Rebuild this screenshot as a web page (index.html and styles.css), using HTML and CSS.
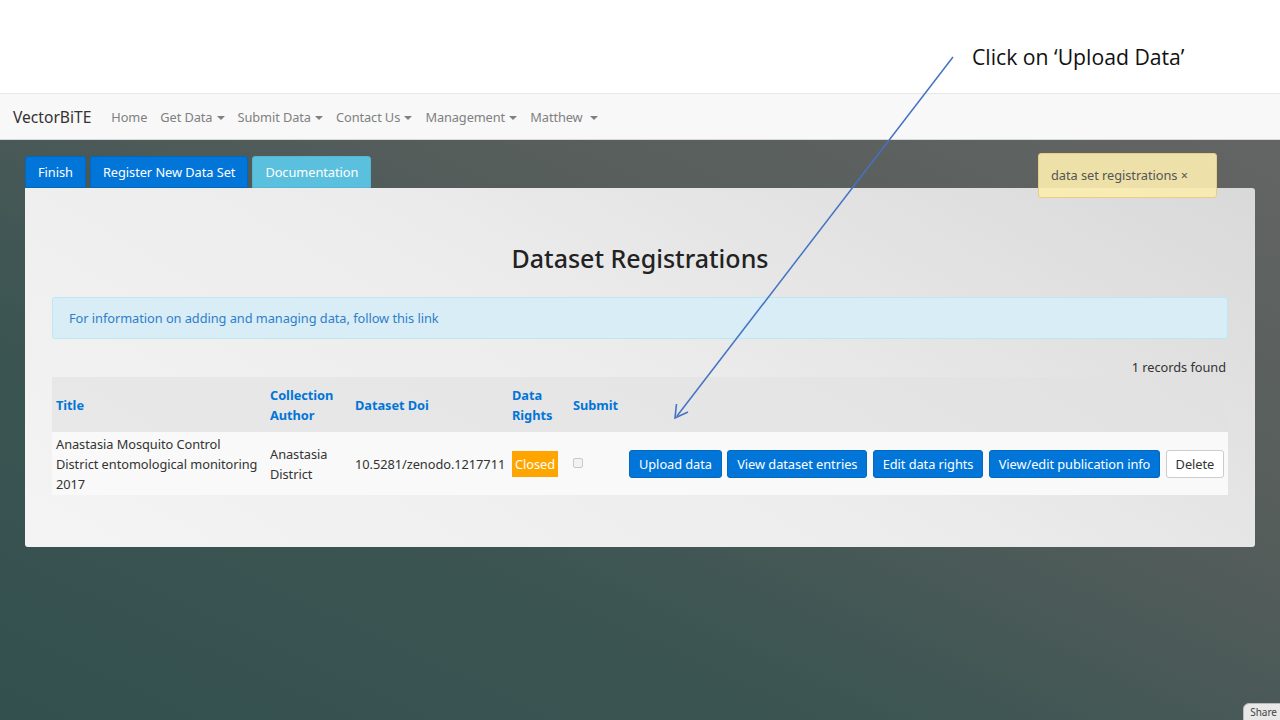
FILE: index.html
```html
<!DOCTYPE html>
<html>
<head>
<meta charset="utf-8">
<link rel="stylesheet" href="styles.css">
</head>
<body>
<div class="slide-top">
  <div class="caption">Click on ‘Upload Data’</div>
</div>
<nav class="navbar">
  <span class="brand">VectorBiTE</span>
  <ul class="nav">
    <li>Home</li>
    <li>Get Data <span class="caret"></span></li>
    <li>Submit Data <span class="caret"></span></li>
    <li>Contact Us <span class="caret"></span></li>
    <li>Management <span class="caret"></span></li>
    <li>Matthew &nbsp;<span class="caret"></span></li>
  </ul>
</nav>
<main class="stage">
  <div class="tabs">
    <button class="btn btn-primary tab">Finish</button>
    <button class="btn btn-primary tab">Register New Data Set</button>
    <button class="btn btn-info tab">Documentation</button>
  </div>
  <section class="panel">
    <h1 class="title">Dataset Registrations</h1>
    <div class="alert">For information on adding and managing data, follow this link</div>
    <div class="records">1 records found</div>
    <table class="grid">
      <colgroup>
        <col class="c1"><col class="c2"><col class="c3"><col class="c4"><col class="c5"><col>
      </colgroup>
      <thead>
        <tr>
          <th>Title</th>
          <th>Collection<br>Author</th>
          <th>Dataset Doi</th>
          <th>Data<br>Rights</th>
          <th>Submit</th>
          <th></th>
        </tr>
      </thead>
      <tbody>
        <tr>
          <td>Anastasia Mosquito Control District entomological monitoring 2017</td>
          <td>Anastasia District</td>
          <td>10.5281/zenodo.1217711</td>
          <td><span class="badge">Closed</span></td>
          <td><span class="check"></span></td>
          <td class="actions">
            <button class="btn btn-primary">Upload data</button>
            <button class="btn btn-primary">View dataset entries</button>
            <button class="btn btn-primary">Edit data rights</button>
            <button class="btn btn-primary">View/edit publication info</button>
            <button class="btn btn-default">Delete</button>
          </td>
        </tr>
      </tbody>
    </table>
  </section>
  <div class="notice">data set registrations <span class="x">×</span></div>
  <div class="share">Share</div>
</main>
<svg class="arrow" width="1280" height="720" viewBox="0 0 1280 720">
  <line x1="953" y1="57" x2="677" y2="416" stroke="#4472c4" stroke-width="1.5"/>
  <polyline points="676.5,404 675,418 688,412" fill="none" stroke="#4472c4" stroke-width="1.6"/>
</svg>
</body>
</html>
```
FILE: styles.css
```css
html, body {
  margin: 0;
  padding: 0;
  width: 1280px;
  height: 720px;
  overflow: hidden;
  font-family: "Noto Sans", "Open Sans", sans-serif;
}
body { position: relative; }

.slide-top {
  height: 93px;
  background: #ffffff;
  position: relative;
}
.caption {
  position: absolute;
  left: 972px;
  top: 42px;
  font-family: "Open Sans", sans-serif;
  font-size: 21.2px;
  color: #111;
}

.navbar {
  background: #f8f8f8;
  border-top: 1px solid #e7e7e7;
  border-bottom: 1px solid #d8d8d8;
  box-sizing: border-box;
  height: 47px;
  display: flex;
  align-items: center;
  padding-left: 13px;
}
.brand {
  font-size: 15.6px;
  color: #333;
  margin-right: 20px;
}
.nav {
  list-style: none;
  margin: 0;
  padding: 0;
  display: flex;
  gap: 13px;
}
.nav li {
  font-size: 12.8px;
  letter-spacing: -0.1px;
  color: #808080;
}
.caret {
  display: inline-block;
  width: 0;
  height: 0;
  border-left: 4px solid transparent;
  border-right: 4px solid transparent;
  border-top: 4px solid #808080;
  vertical-align: middle;
  margin-left: 1px;
}

.stage {
  position: relative;
  height: 580px;
  box-sizing: border-box;
  padding: 16px 25px 0 25px;
  background: linear-gradient(25deg, #33504e 0%, #3c5553 35%, #555d5b 65%, #636564 100%);
}

.btn {
  font-family: inherit;
  font-size: 12.8px;
  letter-spacing: -0.05px;
  border: 1px solid transparent;
  border-radius: 3px;
  color: #fff;
  padding: 0 9px;
  height: 28px;
  cursor: pointer;
  margin: 0;
}
.btn-primary { background: #0275d8; border-color: #0267bf; }
.btn-info { background: #5bc0de; border-color: #54b6d3; }
.btn-default { background: #fff; border-color: #ccc; color: #333; }

.tabs {
  display: flex;
  gap: 4px;
  height: 32px;
}
.tab {
  height: 32px;
  padding: 0 12px;
  border-radius: 3px 3px 0 0;
}

.panel {
  background: linear-gradient(30deg, #f4f4f4 0%, #ececec 50%, #d9d9d9 100%);
  border-radius: 0 3px 3px 3px;
  height: 359px;
  box-sizing: border-box;
  padding: 40px 27px 0 27px;
}
.title {
  margin: 0;
  text-align: center;
  font-size: 25px;
  font-weight: 500;
  color: #222;
  line-height: 60px;
  height: 60px;
}
.alert {
  margin-top: 9px;
  background: #d9edf7;
  border: 1px solid #bce8f1;
  border-radius: 3px;
  color: #2f7fc8;
  font-size: 12.8px;
  letter-spacing: -0.05px;
  line-height: 20px;
  padding: 10px 16px;
}
.records {
  margin-top: 18px;
  text-align: right;
  font-size: 12.8px;
  letter-spacing: -0.05px;
  line-height: 20px;
  color: #333;
  padding-right: 2px;
}
.grid {
  width: 100%;
  border-collapse: collapse;
  table-layout: fixed;
  font-size: 12.8px;
  letter-spacing: -0.05px;
  color: #333;
}
.c1 { width: 214px; }
.c2 { width: 85px; }
.c3 { width: 157px; }
.c4 { width: 61px; }
.c5 { width: 56px; }
.grid thead tr { background: rgba(225,225,225,0.6); }
.grid th {
  text-align: left;
  color: #0275d8;
  font-weight: 700;
  line-height: 20px;
  padding: 8px 4px 7px 4px;
  vertical-align: middle;
}
.grid tbody tr { background: #f9f9f9; }
.grid td {
  line-height: 20px;
  padding: 2px 4px 1px 4px;
  vertical-align: middle;
}
.badge {
  display: inline-block;
  background: #ffa500;
  color: #fff;
  padding: 3px 3px;
  line-height: 20px;
}
.check {
  display: inline-block;
  width: 8px;
  height: 8px;
  border: 1px solid #c8c8c8;
  border-radius: 2px;
  background: #f2f2f2;
  vertical-align: 1px;
}
.actions {
  white-space: nowrap;
}
.actions .btn { margin-right: 2px; }

.notice {
  position: absolute;
  left: 1038px;
  top: 13px;
  width: 179px;
  height: 45px;
  box-sizing: border-box;
  background: rgba(250, 236, 175, 0.92);
  border: 1px solid #e6cf82;
  border-radius: 3px;
  padding: 12px 12px;
  font-size: 12.8px;
  letter-spacing: -0.05px;
  line-height: 18px;
  color: #555;
}
.share {
  position: absolute;
  right: -4px;
  bottom: -6px;
  background: #e8e8e8;
  border: 1px solid #bbb;
  border-radius: 6px 0 0 0;
  font-size: 10px;
  color: #444;
  padding: 1px 6px 6px 6px;
}
.arrow {
  position: absolute;
  left: 0;
  top: 0;
  pointer-events: none;
}
```
